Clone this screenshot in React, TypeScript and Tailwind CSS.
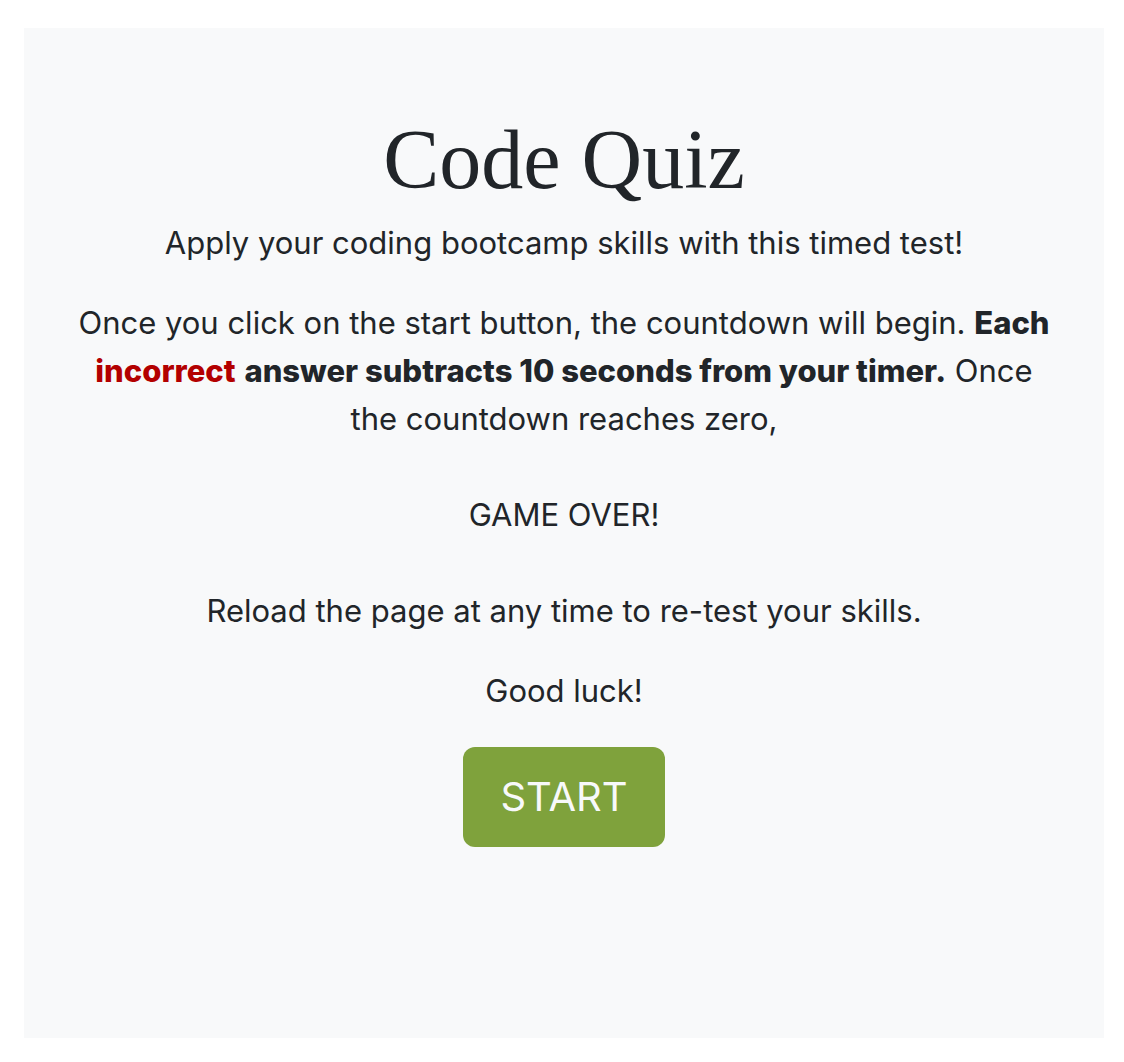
export default function App() {
  return (
    <div className="bg-white min-h-[1062px] pt-[28px] pl-[24px]">
      <div
        className="bg-[#f8f9fa] w-[1080px] h-[1010px] px-[48px] pt-[84px] text-center text-[#212529] flex flex-col items-center"
        style={{ fontFamily: '"Inter", "Liberation Sans", sans-serif' }}
      >
        <h1 className="text-[84px] leading-[96px] mb-[11px]" style={{ fontFamily: '"Liberation Serif", serif' }}>
          Code Quiz
        </h1>
        <p className="text-[31px] leading-[48px] mb-[32px]">Apply your coding bootcamp skills with this timed test!</p>
        <p className="text-[31px] leading-[48px] mb-[32px]">
          Once you click on the start button, the countdown will begin.{" "}
          <strong className="font-extrabold">Each</strong>{" "}
          <strong className="font-extrabold text-[#b30000]">incorrect</strong>{" "}
          <strong className="font-extrabold">answer subtracts 10 seconds from your timer.</strong>{" "}
          Once the countdown reaches zero,
          <br />
          <br />
          GAME OVER!
          <br />
          <br />
          Reload the page at any time to re-test your skills.
        </p>
        <p className="text-[31px] leading-[48px] mb-[32px]">Good luck!</p>
        <button className="w-[202px] h-[100px] rounded-[12px] bg-[#7fa23c] text-[#f8f9fa] text-[40px]">START</button>
      </div>
    </div>
  );
}
